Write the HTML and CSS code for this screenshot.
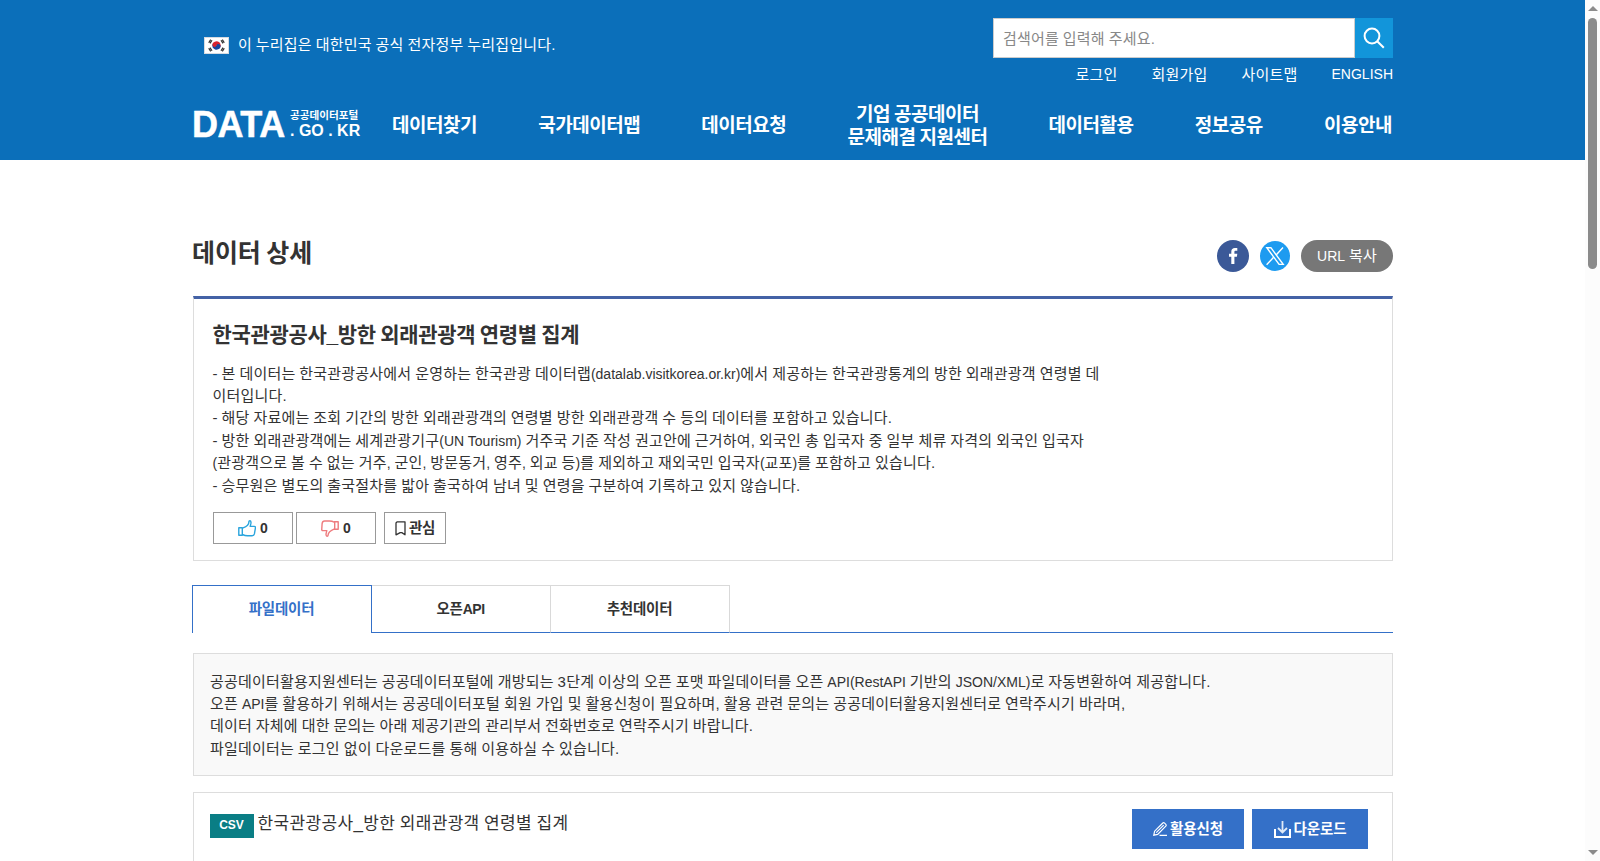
FILE: index.html
```html
<!DOCTYPE html>
<html lang="ko">
<head>
<meta charset="utf-8">
<title>공공데이터포털</title>
<link rel="stylesheet" href="styles.css">
</head>
<body>
<div class="window">
<div class="page">
<header class="header">
<div class="wrap header-inner">
<div class="header-top">
<div class="gov">
<svg class="flag" viewBox="0 0 25 17"><rect width="25" height="17" fill="#fff"/><rect x=".5" y=".5" width="24" height="16" fill="none" stroke="#d5dbe2"/><g transform="rotate(20 12.5 8.5)"><path d="M8.3 8.5a4.2 4.2 0 0 1 8.4 0z" fill="#d8232f"/><path d="M8.3 8.5a4.2 4.2 0 0 0 8.4 0z" fill="#17469e"/><circle cx="10.4" cy="8.5" r="2.1" fill="#d8232f"/><circle cx="14.6" cy="8.5" r="2.1" fill="#17469e"/></g><path d="M4.7 5.8l2-3.2M6 6.4l2-3.2M4.7 11.2l2 3.2M6 10.6l2 3.2M20.3 5.8l-2-3.2M19 6.4l-2-3.2M20.3 11.2l-2 3.2M19 10.6l-2 3.2" stroke="#333" stroke-width="1.2"/></svg>
<span class="gov-text">이 누리집은 대한민국 공식 전자정부 누리집입니다.</span>
</div>
<div class="tools">
<div class="search"><div class="search-field">검색어를 입력해 주세요.</div><div class="search-btn"><svg width="22" height="22" viewBox="0 0 22 22" fill="none" stroke="#fff" stroke-width="2"><circle cx="9" cy="9" r="7.400"/><path d="M14.200 14.200l6.600 6.600"/></svg></div></div>
<div class="links"><span>로그인</span><span>회원가입</span><span>사이트맵</span><span class="latin">ENGLISH</span></div>
</div>
</div>
<div class="header-nav">
<div class="logo"><span class="logo-data">DATA</span><div class="logo-side"><span class="logo-kr">공공데이터포털</span><span class="logo-go">. GO . KR</span></div></div>
<nav class="nav"><span>데이터찾기</span><span>국가데이터맵</span><span>데이터요청</span><span>기업 공공데이터<br>문제해결 지원센터</span><span>데이터활용</span><span>정보공유</span><span>이용안내</span></nav>
</div>
</div>
</header>
<main class="wrap">
<div class="title-row">
<h1 class="title">데이터 상세</h1>
<div class="share">
<svg class="fb" viewBox="0 0 32 32"><circle cx="16" cy="16" r="16" fill="#3b5998"/><path d="M14.3 24v-7.2H12v-3h2.3v-2.1c0-2.5 1.4-3.7 3.6-3.7h2.4v2.8h-1.6c-1 0-1.3.5-1.3 1.3v1.7h2.9l-.4 3h-2.5V24z" fill="#fff"/></svg>
<svg class="tw" viewBox="0 0 30 30"><circle cx="15" cy="15" r="15" fill="#1d9bf0"/><g fill="none" stroke="#fff" stroke-width="1.4"><path d="M6.8 6.7h4.1l12.3 16.7h-4.1z"/><path d="M23 6.5l-7.1 7.7M13.6 16.3L6.6 23.8"/></g></svg>
<span class="url"><span class="latin">URL</span> 복사</span>
</div>
</div>
<section class="detail">
<h2 class="detail-title">한국관광공사_방한 외래관광객 연령별 집계</h2>
<p class="text">- 본 데이터는 한국관광공사에서 운영하는 한국관광 데이터랩<span class="latin">(datalab.visitkorea.or.kr)</span>에서 제공하는 한국관광통계의 방한 외래관광객 연령별 데<br>이터입니다.<br>- 해당 자료에는 조회 기간의 방한 외래관광객의 연령별 방한 외래관광객 수 등의 데이터를 포함하고 있습니다.<br>- 방한 외래관광객에는 세계관광기구<span class="latin">(UN Tourism)</span> 거주국 기준 작성 권고안에 근거하여, 외국인 총 입국자 중 일부 체류 자격의 외국인 입국자<br><span class="latin">(</span>관광객으로 볼 수 없는 거주<span class="latin">,</span> 군인<span class="latin">,</span> 방문동거<span class="latin">,</span> 영주<span class="latin">,</span> 외교 등<span class="latin">)</span>를 제외하고 재외국민 입국자<span class="latin">(</span>교포<span class="latin">)</span>를 포함하고 있습니다.<br>- 승무원은 별도의 출국절차를 밟아 출국하여 남녀 및 연령을 구분하여 기록하고 있지 않습니다.</p>
<div class="votes">
<div class="vote"><svg width="18" height="17" viewBox="0 0 18 17" fill="none" stroke="#29a4dd" stroke-width="1.4" stroke-linejoin="round"><path d="M.8 7.800h3.500v7.400H.8zM4.300 8.300c2.700-1.200 6.600-2.500 6.600-6.400 0-.7.500-1.200 1.100-1.100 1 .2 1.100 1.400.9 2.600l-.7 3h4c1.200 0 1.400.8 1.200 1.800l-1 5.700c-.3 1.500-1 1.900-2.300 1.900H9.500c-2 0-3.400-.5-5.200-1.300z"/></svg><b>0</b></div>
<div class="vote"><svg width="18" height="17" viewBox="0 0 18 17" fill="none" stroke="#ee7b7e" stroke-width="1.4" stroke-linejoin="round"><path d="M17.200 9.200h-3.500V1.800h3.500zM13.700 8.700c-2.700 1.200-6.600 2.500-6.600 6.400 0 .7-.5 1.200-1.100 1.100-1-.2-1.100-1.400-.9-2.600l.7-3H2c-1.200 0-1.400-.8-1.200-1.800l.3-5.100C1.400 1.500 2.100 1 3.600 1h4.900c2 0 3.400.5 5.200 1.300z"/></svg><b>0</b></div>
<div class="fav"><svg width="11" height="15" viewBox="0 0 11 15" fill="none" stroke="#333" stroke-width="1.3"><path d="M2 .8h8v13l-3.200-2.200H5.200L1 13.800V2z" stroke-linejoin="round"/></svg><b>관심</b></div>
</div>
</section>
<div class="tabs"><div class="tab on">파일데이터</div><div class="tab">오픈<span class="tab-latin">API</span></div><div class="tab">추천데이터</div><div class="tab-rest"></div></div>
<section class="notice text">공공데이터활용지원센터는 공공데이터포털에 개방되는 3단계 이상의 오픈 포맷 파일데이터를 오픈 <span class="latin">API(RestAPI</span> 기반의 <span class="latin">JSON/XML)</span>로 자동변환하여 제공합니다.<br>오픈 <span class="latin">API</span>를 활용하기 위해서는 공공데이터포털 회원 가입 및 활용신청이 필요하며, 활용 관련 문의는 공공데이터활용지원센터로 연락주시기 바라며,<br>데이터 자체에 대한 문의는 아래 제공기관의 관리부서 전화번호로 연락주시기 바랍니다.<br>파일데이터는 로그인 없이 다운로드를 통해 이용하실 수 있습니다.</section>
<section class="file">
<span class="csv">CSV</span><span class="file-name">한국관광공사_방한 외래관광객 연령별 집계</span>
<div class="actions">
<div class="btn apply"><svg width="14" height="14" viewBox="0 0 14 14" fill="none" stroke="#fff" stroke-width="1.2"><path d="M.8 13.200l.8-4L9.800 1q.9-.7 1.800.2l1.200 1.200q.8.900 0 1.800L4.700 12.400zM3.200 10.600l7.500-7.500M6.500 13.300H14"/></svg><b>활용신청</b></div>
<div class="btn down"><svg width="17" height="17" viewBox="0 0 17 17" fill="none" stroke="#fff"><path d="M1 8v8h15V8" stroke-width="2"/><path d="M8.500 0v11M4 7l4.500 4.500L13 7" stroke-width="1.800" stroke-opacity=".85"/></svg><b>다운로드</b></div>
</div>
</section>
</main>
</div>
<div class="scrollbar"><i class="arrow up"></i><i class="thumb"></i><i class="arrow dn"></i></div>
</div>
</body>
</html>
```
FILE: styles.css
```css
*{box-sizing:border-box}
body{margin:0;font-family:"Liberation Sans","Noto Sans CJK KR",sans-serif;font-size:15px;letter-spacing:.2px;word-spacing:-.5px;color:#333;background:#fff;overflow:hidden}
h1,h2,p{margin:0}
svg{display:block;flex:none}
/* Latin runs are set one pixel smaller than the Hangul around them */
.latin{font-size:14px;letter-spacing:0;word-spacing:0}
.window{display:flex;height:861px;overflow:hidden}
.page{flex:1;min-width:0;white-space:nowrap}
.wrap{width:1200px;margin:0 auto 0 193px}
.header{background:#0b6fba;color:#fff;height:160px}
.header-inner{padding-top:18px}
.header-top{display:flex;justify-content:space-between;height:72px}
.gov{display:flex;align-items:center;height:54px;padding-left:11px;gap:9px}
.flag{width:25px;height:17px}
.gov-text{line-height:20px}
.search{display:flex;width:400px;height:40px}
.search-field{flex:1;background:#fff;border:1px solid #ccc;color:#888;padding-left:9px;line-height:39px}
.search-btn{width:38px;background:#1295da;display:flex;align-items:center;justify-content:center}
.links{display:flex;justify-content:flex-end;gap:34px;line-height:32px;padding-top:1px}
.links .latin{margin-top:-1px}
.header-nav{display:flex;height:70px;align-items:center;justify-content:space-between;margin:0 1px 0 -1px}
.logo{display:flex;width:172px;height:34px;gap:5px;letter-spacing:0;word-spacing:0}
.logo-data{font:bold 36px/34px "Liberation Sans",sans-serif;width:93px;letter-spacing:-.5px;-webkit-text-stroke:.5px #fff}
.logo-side{display:flex;flex-direction:column}
.logo-kr{font-size:10.600px;font-weight:bold;line-height:14px}
.logo-go{font:bold 16px/18px "Liberation Sans",sans-serif}
.nav{display:flex;align-items:center;justify-content:space-between;width:1000px;padding-top:1px;font-weight:bold;font-size:19px;letter-spacing:-.48px;word-spacing:-.8px;line-height:23px;text-align:center}
.title-row{display:flex;justify-content:space-between;height:136px;padding-top:80px}
.title{font-size:25px;line-height:27px;letter-spacing:-.100px;word-spacing:-1.300px;margin-left:-1px}
.share{display:flex;align-items:center;height:32px}
.fb{width:32px;height:32px;margin-right:11px}
.tw{width:30px;height:30px;margin-right:11px}
.url{width:92px;height:32px;border-radius:16px;background:#777;color:#fff;text-align:center;line-height:32px}
.detail{height:265px;border:1px solid #ddd;border-top:3px solid #4462a6;padding:22px 19px 0}
.detail-title{font-size:21px;line-height:28px;letter-spacing:-.340px;word-spacing:-.950px;margin-left:-.500px}
.text{line-height:22.400px}
.detail .text{margin:13.500px 0 0 -.500px}
.votes{display:flex;margin-top:15.100px}
.vote,.fav{height:32px;border:1px solid #999;display:flex;align-items:center;justify-content:center;gap:4px}
.vote{width:80px;margin-right:3px;font-size:14px}
.fav{width:62px;margin-left:5px;gap:3px;font-size:14.500px;letter-spacing:-.340px;line-height:26px}
.fav b{margin-top:-1px}
.tabs{display:flex;height:48px;margin:24px 0 20px -1px}
.tab{width:179px;border:1px solid #d9d9d9;border-left:0;border-bottom-color:#3470c8;padding-right:1px;text-align:center;font-weight:bold;font-size:14.500px;line-height:47px;letter-spacing:-.200px}
.tab.on{width:180px;border:1px solid #3470c8;border-bottom:0;color:#3470c8}
.tab-latin{font-size:14px;letter-spacing:-.500px}
.tab-rest{flex:1;border-bottom:1px solid #3470c8}
.notice{height:123px;background:#f9f9f9;border:1px solid #ddd;padding:16.500px 16px}
.file{display:flex;height:150px;margin-top:16px;border:1px solid #ddd;padding:16px 24px 0 16px}
.csv{width:44px;height:24px;margin-top:5px;padding-right:1px;background:#0a7e85;color:#fff;font-weight:bold;font-size:12px;letter-spacing:0;line-height:22px;text-align:center}
.file-name{font-size:17px;margin-left:3.500px;line-height:30px;letter-spacing:.350px;word-spacing:-.640px}
.actions{display:flex;gap:8px;margin-left:auto}
.btn{height:40px;background:#3470c8;color:#fff;display:flex;align-items:center;justify-content:center;gap:3px;font-size:14.500px;letter-spacing:-.100px}
.btn b{margin-top:-3px}
.apply{width:112px}
.down{width:116px}
.scrollbar{width:15px;background:#fcfcfc;display:flex;flex-direction:column;align-items:center}
.arrow{border:5px solid transparent}
.up{border-top:0;border-bottom-color:#8b8b8b;margin:6px 0 7px}
.thumb{width:9px;height:251px;background:#8b8b8b;border-radius:5px}
.dn{border-bottom:0;border-top-color:#8b8b8b;margin:auto 0 6px}
```
